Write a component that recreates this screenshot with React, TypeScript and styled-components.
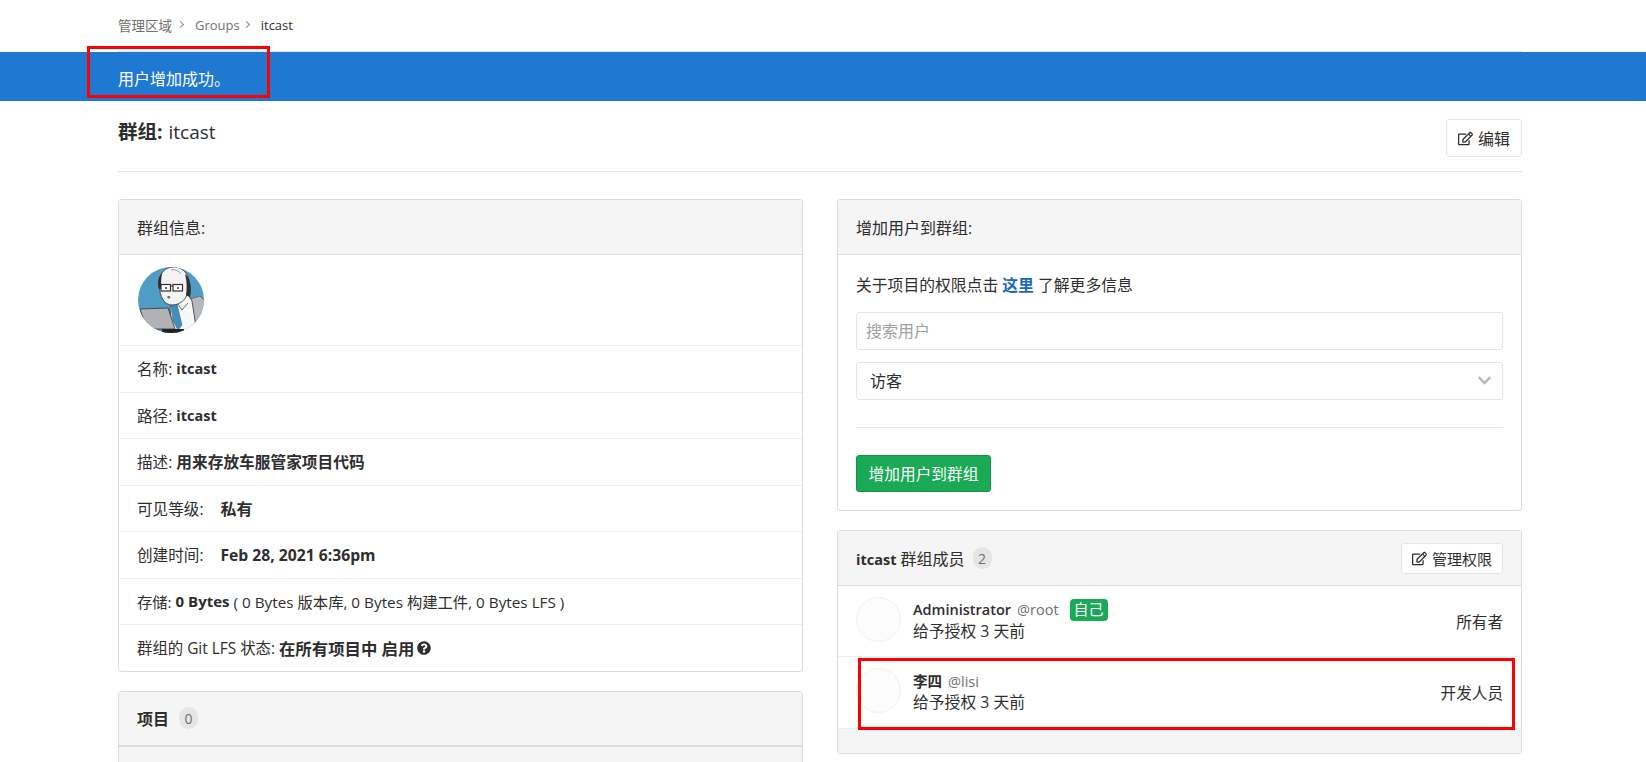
import styled, { createGlobalStyle } from 'styled-components'
import { FaChevronDown, FaQuestionCircle, FaRegEdit } from 'react-icons/fa'

const GlobalStyle = createGlobalStyle`
  html, body {
    margin: 0;
    height: 762px;
    overflow: hidden;
    background: #fff;
  }
  * {
    box-sizing: border-box;
  }
  body {
    font-family: "Open Sans", "Noto Sans CJK SC", sans-serif;
    font-size: 15px;
    color: #2e2e2e;
  }
`

const Page = styled.div`
  position: relative;
  width: 1646px;
  height: 762px;
  overflow: hidden;
`

const Container = styled.div`
  width: 1404px;
  margin-left: 118px;
`

const Breadcrumb = styled.nav`
  display: flex;
  align-items: center;
  gap: 9px;
  height: 52px;
  padding-bottom: 2px;
  border-bottom: 1px solid #e5e5e5;
  font-size: 13.5px;
  color: #707070;
  i {
    font-style: normal;
    font-size: 13px;
    margin-right: -2px;
  }
  b {
    font-size: 13px;
    font-weight: 500;
    color: #2e2e2e;
  }
`

const Caret = styled.span`
  width: 5px;
  height: 5px;
  margin: 0 3px 0 -3px;
  border-top: 1px solid #8c8c8c;
  border-right: 1px solid #8c8c8c;
  transform: rotate(45deg);
`

const Flash = styled.div`
  display: flex;
  align-items: center;
  height: 49px;
  padding: 3px 0 0 118px;
  background: #1f78d1;
  font-size: 16px;
  color: #fff;
`

const TitleBar = styled.div`
  display: flex;
  justify-content: space-between;
  height: 71px;
  padding-top: 18px;
  border-bottom: 1px solid #e5e5e5;
`

const Title = styled.h1`
  margin: 0;
  font-size: 19px;
  font-weight: 400;
  line-height: 26px;
  b {
    font-size: 19.5px;
    font-weight: 700;
    margin-right: 1px;
  }
`

const Button = styled.button<{ $small?: boolean }>`
  display: inline-flex;
  align-items: center;
  justify-content: center;
  gap: 5px;
  height: ${({ $small }) => ($small ? '31px' : '38px')};
  width: ${({ $small }) => ($small ? '102px' : '76px')};
  padding: 0;
  border: 1px solid #e5e5e5;
  border-radius: 3px;
  background: #fff;
  font: inherit;
  font-size: ${({ $small }) => ($small ? '15px' : '16px')};
  color: #2e2e2e;
  svg {
    width: 15px;
    height: 15px;
  }
`

const Columns = styled.div`
  display: grid;
  grid-template-columns: 685px 685px;
  gap: 34px;
  margin-top: 27px;
`

const Column = styled.div`
  display: flex;
  flex-direction: column;
  gap: 19px;
`

const Panel = styled.section`
  border: 1px solid #dcdcdc;
  border-radius: 3px;
  background: #fff;
`

const PanelHeader = styled.header<{ $thick?: boolean }>`
  display: flex;
  align-items: center;
  justify-content: space-between;
  height: 55px;
  padding: 0 18px;
  background: #f5f5f5;
  border-bottom: ${({ $thick }) => ($thick ? '2px' : '1px')} solid #dcdcdc;
  font-size: 16px;
  b {
    font-weight: 700;
  }
`

const HeaderTitle = styled.div<{ $gap: number }>`
  display: flex;
  align-items: center;
  gap: ${({ $gap }) => $gap}px;
  b.latin {
    font-size: 14.5px;
  }
`

const Count = styled.span`
  display: inline-flex;
  align-items: center;
  justify-content: center;
  width: 19px;
  height: 22px;
  border-radius: 10px;
  background: #e5e5e5;
  font-size: 14px;
  font-weight: 400;
  color: #707070;
`

const InfoRow = styled.div<{ $tall?: boolean; $size?: number }>`
  display: flex;
  align-items: center;
  height: ${({ $tall }) => ($tall ? '91px' : '46.5px')};
  padding: 0 18px;
  border-bottom: 1px solid #eee;
  font-size: ${({ $size }) => $size ?? 15.6}px;
  white-space: pre;
  &:last-child {
    height: 45.5px;
    border-bottom: none;
  }
`

const Strong = styled.strong<{ $size?: number; $gap?: number }>`
  font-weight: 700;
  font-size: ${({ $size }) => $size ?? 15}px;
  margin-left: ${({ $gap }) => $gap ?? 0}px;
`

const Help = styled(FaQuestionCircle)`
  width: 14px;
  height: 14px;
  margin-left: 3px;
`

const ProjectBody = styled.div`
  height: 40px;
  background: #f5f5f5;
`

const FormBody = styled.div`
  display: flex;
  flex-direction: column;
  height: 255px;
  padding: 0 18px;
`

const Hint = styled.p`
  margin: 0;
  padding-top: 19px;
  height: 57px;
  font-size: 15.8px;
  line-height: 22px;
  a {
    color: #1b69b6;
    font-weight: 700;
  }
`

const Field = styled.div<{ $placeholder?: boolean }>`
  display: flex;
  align-items: center;
  justify-content: space-between;
  height: 38px;
  margin-bottom: 12px;
  padding: 0 10px 2px ${({ $placeholder }) => ($placeholder ? '9px' : '13px')};
  border: 1px solid #e5e5e5;
  border-radius: 3px;
  font-size: 16px;
  color: ${({ $placeholder }) => ($placeholder ? '#a0a0a0' : '#2e2e2e')};
  svg {
    width: 15px;
    height: 15px;
    color: #b8b8b8;
  }
`

const Divider = styled.hr`
  width: 100%;
  margin: 15px 0 27px;
  border: none;
  border-top: 1px solid #e5e5e5;
`

const SubmitButton = styled.button`
  width: 135px;
  height: 37px;
  padding: 0;
  border: 1px solid #168f48;
  border-radius: 3px;
  background: #1aaa55;
  font: inherit;
  font-size: 15.7px;
  color: #fff;
`

const MemberRow = styled.div<{ $height: number }>`
  display: flex;
  align-items: center;
  height: ${({ $height }) => $height}px;
  padding: 0 18px;
  border-bottom: 1px solid #eee;
`

const MemberAvatar = styled.div`
  flex: none;
  width: 45px;
  height: 45px;
  margin: 0 12px 4px 0;
  border: 1px solid #f0f0f0;
  border-radius: 50%;
  background: #fcfcfc;
`

const MemberInfo = styled.div`
  flex: 1;
  display: flex;
  flex-direction: column;
  margin-bottom: 2px;
  font-size: 15.8px;
  line-height: 21px;
`

const MemberName = styled.div`
  display: flex;
  align-items: center;
  font-size: 14.5px;
  b {
    font-weight: 600;
  }
  span {
    margin-left: 6px;
    color: #707070;
  }
`

const SelfBadge = styled.em`
  display: inline-flex;
  align-items: center;
  justify-content: center;
  width: 38px;
  height: 22px;
  margin-left: 11px;
  border-radius: 4px;
  background: #1aaa55;
  font-style: normal;
  font-size: 15px;
  color: #fff;
`

const Role = styled.div`
  font-size: 15.6px;
`

const PanelFooter = styled.div`
  height: 24px;
  background: #f5f5f5;
`

const RedBox = styled.div<{ $left: number; $top: number; $width: number; $height: number }>`
  position: absolute;
  left: ${({ $left }) => $left}px;
  top: ${({ $top }) => $top}px;
  width: ${({ $width }) => $width}px;
  height: ${({ $height }) => $height}px;
  border: 3px solid #f00;
`

const GroupAvatar = styled.svg`
  display: block;
  width: 66px;
  height: 66px;
  margin-left: 1px;
`

const AvatarDrawing = () => (
  <GroupAvatar viewBox="0 0 66 66">
    <defs>
      <clipPath id="round">
        <circle cx="33" cy="33" r="33" />
      </clipPath>
    </defs>
    <g clipPath="url(#round)">
      <rect width="66" height="66" fill="#4f9cc5" />
      <path d="M52 32 L62 29 L67 34 V58 L58 60 Z" fill="#b7b8bb" stroke="#555" strokeWidth="0.7" />
      <path d="M32 40 L44 31 L50 28 L54 34 L58 60 L46 66 H34 Z" fill="#f7f7f7" stroke="#333" strokeWidth="0.8" />
      <path d="M33 39 L39 37 L44 58 L40 63 L35 54 Z" fill="#3f8fbf" stroke="#2c5f7f" strokeWidth="0.5" />
      <path d="M38 34 L44 43 L50 36" fill="none" stroke="#333" strokeWidth="0.7" />
      <path d="M21 18 C21 6 27 0 36 0 C45 0 51 7 51 17 C51 29 45 38 34 38 C26 38 22 30 21 18 Z" fill="#f3f3f3" stroke="#333" strokeWidth="0.8" />
      <path d="M21 22 C19 16 20 10 24 6 C23 12 23 17 23 22 Z" fill="#2f2f2f" />
      <path d="M48 28 L52 30 C54 22 53 12 47 7 C49 14 49 22 48 28 Z" fill="#2f2f2f" />
      <path d="M33 3 C37 2 41 4 43 7" fill="none" stroke="#999" strokeWidth="1" />
      <rect x="23" y="17.5" width="9.5" height="6.5" fill="#fff" stroke="#333" strokeWidth="1.2" />
      <rect x="35" y="17.5" width="9.5" height="6.5" fill="#fff" stroke="#333" strokeWidth="1.2" />
      <path d="M32.5 19 H35" stroke="#333" strokeWidth="1" />
      <circle cx="28" cy="21" r="1" fill="#333" />
      <circle cx="40" cy="21" r="1" fill="#333" />
      <path d="M29 30 C30 28.5 31.5 28.5 32.5 30 C31.5 32 30 32 29 30 Z" fill="#666" />
      <path d="M2 42 L30 41 L37 62 H9 Z" fill="#b1b2b6" stroke="#333" strokeWidth="0.8" />
      <rect x="24" y="62" width="22" height="4" fill="#222" />
    </g>
  </GroupAvatar>
)

export default function App() {
  return (
    <Page>
      <GlobalStyle />
      <Container>
        <Breadcrumb>
          <span>管理区域</span>
          <Caret />
          <i>Groups</i>
          <Caret />
          <b>itcast</b>
        </Breadcrumb>
      </Container>
      <Flash>用户增加成功。</Flash>
      <Container>
        <TitleBar>
          <Title>
            <b>群组:</b> itcast
          </Title>
          <Button>
            <FaRegEdit />
            编辑
          </Button>
        </TitleBar>
        <Columns>
          <Column>
            <Panel>
              <PanelHeader>群组信息:</PanelHeader>
              <InfoRow $tall>
                <AvatarDrawing />
              </InfoRow>
              <InfoRow>
                名称: <Strong $size={14.5}>itcast</Strong>
              </InfoRow>
              <InfoRow>
                路径: <Strong $size={14.5}>itcast</Strong>
              </InfoRow>
              <InfoRow>
                描述: <Strong $size={15.7}>用来存放车服管家项目代码</Strong>
              </InfoRow>
              <InfoRow>
                可见等级:<Strong $size={16} $gap={17}>私有</Strong>
              </InfoRow>
              <InfoRow>
                创建时间:<Strong $size={15.7} $gap={17}>Feb 28, 2021 6:36pm</Strong>
              </InfoRow>
              <InfoRow $size={15.3}>
                存储: <Strong>0 Bytes</Strong> ( 0 Bytes 版本库, 0 Bytes 构建工件, 0 Bytes LFS )
              </InfoRow>
              <InfoRow $size={15.4}>
                群组的 Git LFS 状态: <Strong $size={16.4}>在所有项目中 启用</Strong>
                <Help />
              </InfoRow>
            </Panel>
            <Panel>
              <PanelHeader $thick>
                <HeaderTitle $gap={10}>
                  <b>项目</b>
                  <Count>0</Count>
                </HeaderTitle>
              </PanelHeader>
              <ProjectBody />
            </Panel>
          </Column>
          <Column>
            <Panel>
              <PanelHeader>增加用户到群组:</PanelHeader>
              <FormBody>
                <Hint>
                  关于项目的权限点击 <a>这里</a> 了解更多信息
                </Hint>
                <Field $placeholder>搜索用户</Field>
                <Field>
                  访客
                  <FaChevronDown />
                </Field>
                <Divider />
                <SubmitButton>增加用户到群组</SubmitButton>
              </FormBody>
            </Panel>
            <Panel>
              <PanelHeader>
                <HeaderTitle $gap={8}>
                  <span>
                    <b className="latin">itcast</b> 群组成员
                  </span>
                  <Count>2</Count>
                </HeaderTitle>
                <Button $small>
                  <FaRegEdit />
                  管理权限
                </Button>
              </PanelHeader>
              <MemberRow $height={71}>
                <MemberAvatar />
                <MemberInfo>
                  <MemberName>
                    <b>Administrator</b>
                    <span>@root</span>
                    <SelfBadge>自己</SelfBadge>
                  </MemberName>
                  <div>给予授权 3 天前</div>
                </MemberInfo>
                <Role>所有者</Role>
              </MemberRow>
              <MemberRow $height={72}>
                <MemberAvatar />
                <MemberInfo>
                  <MemberName>
                    <b>李四</b>
                    <span>@lisi</span>
                  </MemberName>
                  <div>给予授权 3 天前</div>
                </MemberInfo>
                <Role>开发人员</Role>
              </MemberRow>
              <PanelFooter />
            </Panel>
          </Column>
        </Columns>
      </Container>
      <RedBox $left={87} $top={46} $width={183} $height={52} />
      <RedBox $left={858} $top={658} $width={657} $height={72} />
    </Page>
  )
}
